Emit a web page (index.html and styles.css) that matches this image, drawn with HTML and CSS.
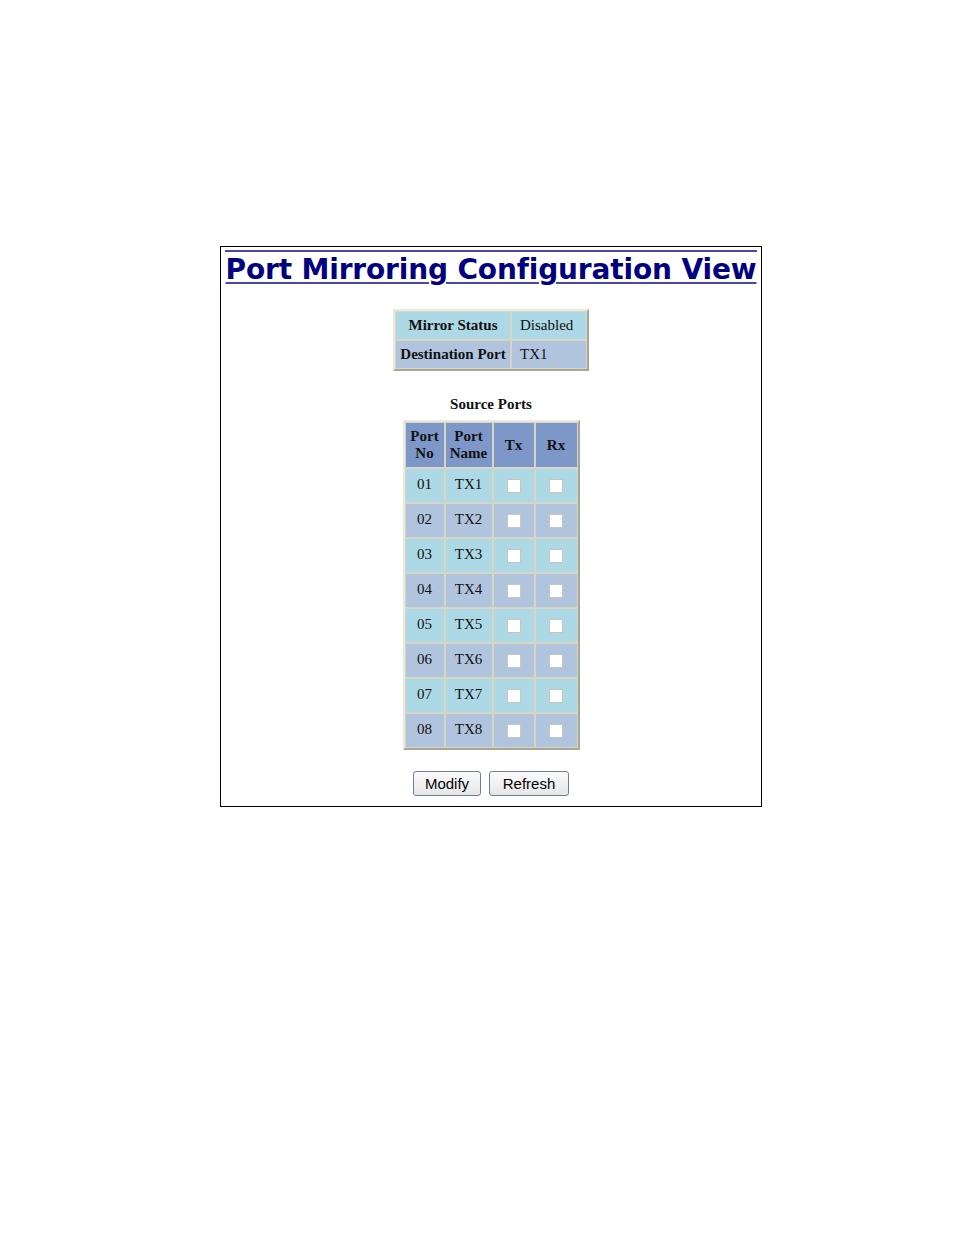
FILE: index.html
```html
<!DOCTYPE html>
<html>
<head>
<meta charset="utf-8">
<link rel="stylesheet" href="styles.css">
</head>
<body>
<div class="frame">
  <div class="title-wrap">
    <h1 class="title">Port Mirroring Configuration View</h1>
  </div>
  <table class="status">
    <tr class="r1"><th>Mirror Status</th><td>Disabled</td></tr>
    <tr class="r2"><th>Destination Port</th><td>TX1</td></tr>
  </table>
  <div class="caption">Source Ports</div>
  <table class="ports">
    <tr class="head"><th class="c1">Port<br>No</th><th class="c2">Port<br>Name</th><th class="c3">Tx</th><th class="c4">Rx</th></tr>
    <tr class="odd"><td>01</td><td>TX1</td><td><span class="cb"></span></td><td><span class="cb"></span></td></tr>
    <tr class="even"><td>02</td><td>TX2</td><td><span class="cb"></span></td><td><span class="cb"></span></td></tr>
    <tr class="odd"><td>03</td><td>TX3</td><td><span class="cb"></span></td><td><span class="cb"></span></td></tr>
    <tr class="even"><td>04</td><td>TX4</td><td><span class="cb"></span></td><td><span class="cb"></span></td></tr>
    <tr class="odd"><td>05</td><td>TX5</td><td><span class="cb"></span></td><td><span class="cb"></span></td></tr>
    <tr class="even"><td>06</td><td>TX6</td><td><span class="cb"></span></td><td><span class="cb"></span></td></tr>
    <tr class="odd"><td>07</td><td>TX7</td><td><span class="cb"></span></td><td><span class="cb"></span></td></tr>
    <tr class="even"><td>08</td><td>TX8</td><td><span class="cb"></span></td><td><span class="cb"></span></td></tr>
  </table>
  <div class="buttons">
    <button class="btn btn-modify">Modify</button>
    <button class="btn btn-refresh">Refresh</button>
  </div>
</div>
</body>
</html>
```

FILE: styles.css
```css
html, body {
  margin: 0;
  padding: 0;
  background: #ffffff;
}
body {
  padding-top: 246px;
  padding-left: 220px;
}
.frame {
  width: 540px;
  height: 559px;
  border: 1px solid #000000;
  display: flex;
  flex-direction: column;
  align-items: center;
}
.title-wrap {
  margin-top: 3px;
  width: 532px;
  border-top: 2px solid #4848b0;
  display: flex;
  justify-content: center;
}
.title {
  margin: 0;
  padding-top: 3px;
  font-family: "DejaVu Sans", Verdana, sans-serif;
  font-weight: bold;
  font-size: 28px;
  line-height: 30px;
  color: #000080;
  white-space: nowrap;
  letter-spacing: -0.15px;
  text-decoration: underline;
  text-decoration-color: #4848b0;
  text-decoration-thickness: 2px;
  text-underline-offset: 3px;
}
table {
  border-collapse: separate;
  border-spacing: 0;
  font-family: "Liberation Serif", "Times New Roman", serif;
  font-size: 15px;
  color: #111111;
}
.status {
  margin-top: 24px;
  border: 2px solid;
  border-color: #ebe8dc #a9a596 #a9a596 #ebe8dc;
}
.status th, .status td {
  height: 27px;
  padding: 0 4px;
  border: 1px solid #d9d5c5;
  white-space: nowrap;
}
.status th { font-weight: bold; width: 106px; }
.status td { text-align: left; width: 62px; padding-left: 8px; }
.status .r1 { background: #add8e6; }
.status .r2 { background: #b0c4de; }
.caption {
  margin-top: 25px;
  font-family: "Liberation Serif", "Times New Roman", serif;
  font-weight: bold;
  font-size: 15px;
  line-height: 16px;
  color: #111111;
}
.ports {
  margin-top: 8px;
  border: 2px solid;
  border-color: #ebe8dc #a9a596 #a9a596 #ebe8dc;
}
.ports th, .ports td {
  border: 1px solid #d9d5c5;
  text-align: center;
  padding: 0;
}
.ports th {
  background: #7d98c8;
  font-weight: bold;
  height: 44px;
  line-height: 17px;
}
.ports td { height: 35px; padding-bottom: 3px; box-sizing: border-box; }
.ports .c1 { width: 38px; }
.ports .c2 { width: 46px; }
.ports .c3 { width: 40px; }
.ports .c4 { width: 41px; }
.ports .odd { background: #add8e6; }
.ports .even { background: #b0c4de; }
.cb {
  display: inline-block;
  width: 12px;
  height: 12px;
  background: #ffffff;
  border: 1px solid #c9c6bc;
  vertical-align: middle;
  margin-top: 4px;
}
.buttons {
  margin-top: 21px;
  display: flex;
  gap: 8px;
}
.btn {
  font-family: "Liberation Sans", Arial, sans-serif;
  font-size: 15px;
  height: 25px;
  padding: 0 9px;
  border: 1px solid #6f7f98;
  border-radius: 3px;
  background: linear-gradient(#fbfbfb, #e6e6e6);
  color: #000000;
}
.btn-modify { width: 68px; }
.btn-refresh { width: 80px; }
```
